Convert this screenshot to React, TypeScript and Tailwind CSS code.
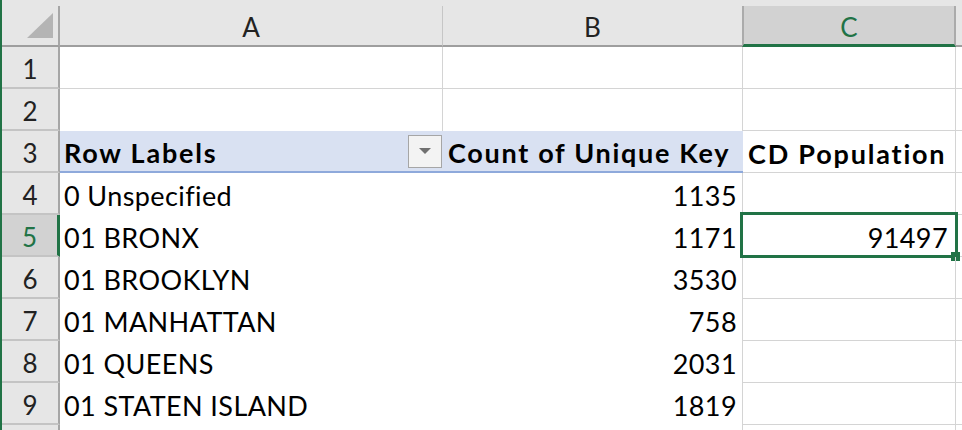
import React from "react";

type Row = {
  n: number;
  a?: string;
  b?: string;
  c?: string;
};

const dataRows: Row[] = [
  { n: 4, a: "0 Unspecified", b: "1135" },
  { n: 5, a: "01 BRONX", b: "1171", c: "91497" },
  { n: 6, a: "01 BROOKLYN", b: "3530" },
  { n: 7, a: "01 MANHATTAN", b: "758" },
  { n: 8, a: "01 QUEENS", b: "2031" },
  { n: 9, a: "01 STATEN ISLAND", b: "1819" },
];

function RowHeader({ n, selected }: { n?: number; selected?: boolean }) {
  return (
    <div
      className={
        "w-[58px] h-[42px] shrink-0 flex items-end justify-center pb-[5px] leading-none text-[26px] border-b-2 border-b-[#c4c4c4] " +
        (selected
          ? "bg-[#d2d2d2] text-[#217346] border-r-[3px] border-r-[#217346]"
          : "bg-[#e6e6e6] text-[#222222] border-r-2 border-r-[#a6a6a6]")
      }
    >
      {n}
    </div>
  );
}

export default function App() {
  return (
    <div className="w-[962px] h-[430px] overflow-hidden bg-white flex font-['Lato',sans-serif] text-[27px] text-black">
      <div className="w-[2px] shrink-0 bg-[#217346]" />
      <div className="flex flex-col">
        {/* Column header row */}
        <div className="h-[47px] shrink-0 bg-[#e6e6e6] pt-[6px] flex text-[26px]">
          <div className="w-[58px] h-[41px] shrink-0 border-r-2 border-r-[#a6a6a6] border-b-2 border-b-[#9e9e9e] flex items-end justify-end pr-[4px] pb-[6px]">
            <svg width="27" height="26" viewBox="0 0 27 26">
              <polygon points="26,0 26,25 0,25" fill="#b4b4b4" />
            </svg>
          </div>
          <div className="w-[383px] h-[41px] shrink-0 border-r border-r-[#c6c6c6] border-b-2 border-b-[#9e9e9e] flex items-end justify-center pb-[5px] leading-none text-[#222222]">
            A
          </div>
          <div className="w-[299px] h-[41px] shrink-0 border-b-2 border-b-[#9e9e9e] flex items-end justify-center pb-[5px] leading-none text-[#222222]">
            B
          </div>
          <div className="w-[214px] h-[41px] shrink-0 bg-[#d2d2d2] border-l-2 border-r-2 border-l-[#ababab] border-r-[#ababab] border-b-[3px] border-b-[#217346] flex items-end justify-center pb-[4px] leading-none text-[#217346]">
            C
          </div>
          <div className="w-[6px] h-[41px] shrink-0 border-b-2 border-b-[#9e9e9e]" />
        </div>

        {/* Rows 1-2 */}
        {[1, 2].map((n) => (
          <div key={n} className="flex h-[42px]">
            <RowHeader n={n} />
            <div
              className={
                "w-[383px] h-[42px] shrink-0 border-r border-r-[#d4d4d4] " +
                (n === 1 ? "border-b border-b-[#d4d4d4]" : "")
              }
            />
            <div
              className={
                "w-[300px] h-[42px] shrink-0 border-r border-r-[#d4d4d4] " +
                (n === 1 ? "border-b border-b-[#d4d4d4]" : "")
              }
            />
            <div className="w-[213px] h-[42px] shrink-0 border-r border-r-[#d4d4d4] border-b border-b-[#d4d4d4]" />
            <div className="w-[6px] h-[42px] shrink-0 border-b border-b-[#d4d4d4]" />
          </div>
        ))}

        {/* Row 3: pivot header */}
        <div className="flex h-[42px]">
          <RowHeader n={3} />
          <div className="w-[683px] h-[42px] shrink-0 bg-[#d9e1f2] border-b-2 border-b-[#8ea9db] flex">
            <div className="w-[383px] shrink-0 flex items-end justify-between pl-[4px] pr-[1px] pb-[4px] font-bold leading-none">
              <span className="pb-[1px] tracking-[1.8px] whitespace-nowrap">Row Labels</span>
              <div className="w-[34px] h-[33px] mb-[-1px] border border-[#a6a6a6] bg-[#f3f3f3] flex items-center justify-center">
                <svg width="12" height="7" viewBox="0 0 12 7">
                  <polygon points="0,0 12,0 6,6" fill="#707070" />
                </svg>
              </div>
            </div>
            <div className="w-[300px] shrink-0 flex items-end pl-[5px] pb-[5px] font-bold leading-none whitespace-nowrap tracking-[1.7px]">
              Count of Unique Key
            </div>
          </div>
          <div className="w-[213px] h-[42px] shrink-0 border-r border-r-[#d4d4d4] border-b border-b-[#d4d4d4] flex items-end pl-[5px] pb-[5px] font-bold leading-none whitespace-nowrap tracking-[1.8px]">
            CD Population
          </div>
          <div className="w-[6px] h-[42px] shrink-0 border-b border-b-[#d4d4d4]" />
        </div>

        {/* Data rows */}
        {dataRows.map((r) => {
          const sel = r.n === 5;
          return (
            <div key={r.n} className="flex h-[42px]">
              <RowHeader n={r.n} selected={sel} />
              <div className="w-[383px] h-[42px] shrink-0 flex items-end pl-[4px] pb-[6px] leading-none whitespace-nowrap tracking-[0.4px]">
                {r.a}
              </div>
              <div className="w-[300px] h-[42px] shrink-0 border-r border-r-[#d4d4d4] flex items-end justify-end pr-[5px] pb-[6px] leading-none tracking-[0.4px]">
                {r.b}
              </div>
              <div className="relative w-[213px] h-[42px] shrink-0 border-r border-r-[#d4d4d4] border-b border-b-[#d4d4d4] flex items-end justify-end pr-[7px] pb-[5px] leading-none tracking-[0.4px]">
                {r.c}
                {sel && (
                  <>
                    <div className="absolute -left-[3px] -top-[3px] -right-[3px] -bottom-[2px] border-[3px] border-[#217346]" />
                    <div className="absolute -right-[5px] -bottom-[5px] w-[9px] h-[9px] bg-[#217346]" />
                  </>
                )}
              </div>
              <div className="w-[6px] h-[42px] shrink-0 border-b border-b-[#d4d4d4]" />
            </div>
          );
        })}

        {/* Row 10 (partial) */}
        <div className="flex h-[42px]">
          <RowHeader />
          <div className="w-[383px] h-[42px] shrink-0" />
          <div className="w-[300px] h-[42px] shrink-0 border-r border-r-[#d4d4d4]" />
          <div className="w-[213px] h-[42px] shrink-0 border-r border-r-[#d4d4d4]" />
        </div>
      </div>
    </div>
  );
}
